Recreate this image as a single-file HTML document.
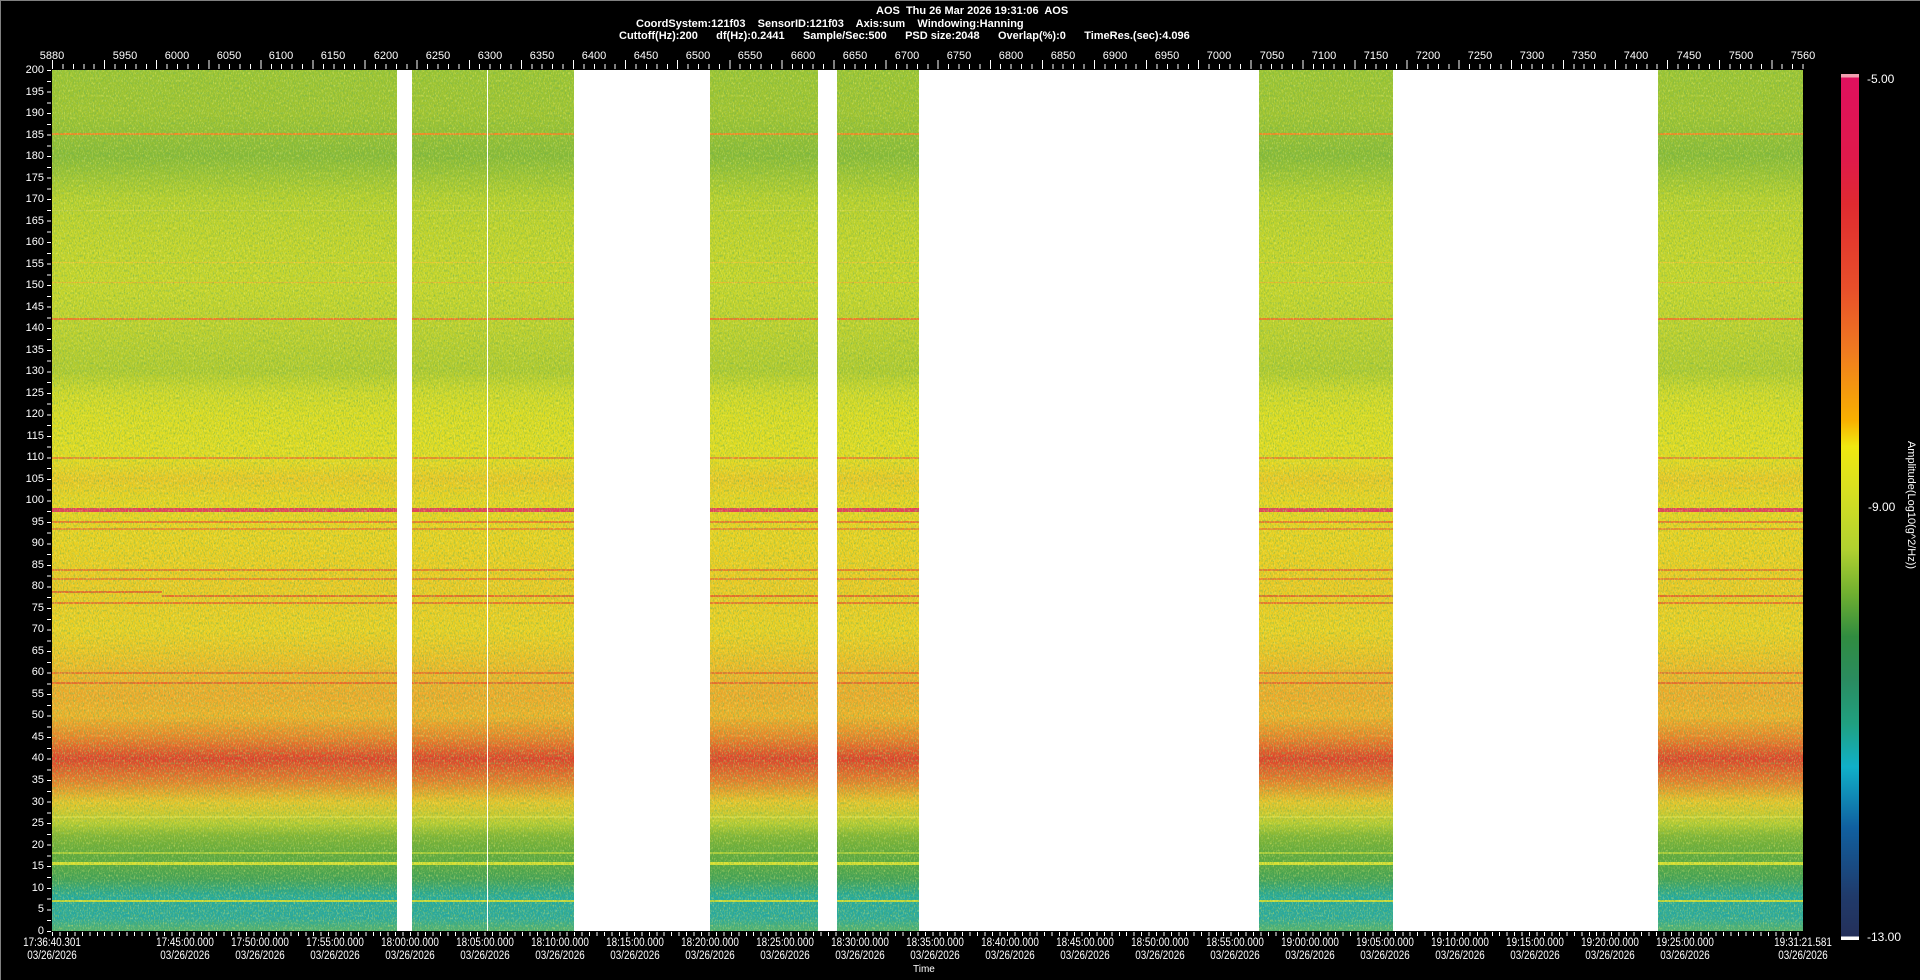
<!DOCTYPE html>
<html><head><meta charset="utf-8"><style>
*{margin:0;padding:0;box-sizing:border-box}
body{width:1920px;height:980px;background:#000;position:relative;overflow:hidden;font-family:"Liberation Sans",sans-serif;color:#fff}
.a{position:absolute;white-space:pre}
.h{font-weight:bold;font-size:11px;line-height:12px}
.yl{position:absolute;left:0;width:44px;text-align:right;font-size:11px;line-height:12px}
.xl{position:absolute;top:50px;width:60px;margin-left:-30px;text-align:center;font-size:11px;line-height:12px}
.tl{position:absolute;top:937px;width:90px;margin-left:-45px;text-align:center;font-size:11.5px;line-height:13px;transform:scaleX(0.86)}
#plot{position:absolute;left:52px;top:70px;width:1751px;height:861px;overflow:hidden;
background:linear-gradient(to bottom,#9cc432 0%,#a0c430 5%,#88ba36 10%,#b8d02c 15%,#c4d42a 20%,#c8d62a 25%,#bed02c 30%,#b0ca2e 35%,#d0d828 37.5%,#dcdc22 40%,#e4dc20 45%,#ecc824 47.5%,#e8d420 50%,#ecd020 55%,#eec822 60%,#ecd022 65%,#eec424 67.5%,#f0b428 70%,#f0a82a 72.5%,#f0b028 75%,#ec8028 77.5%,#e03c2a 80%,#e8782a 82.5%,#e8c42a 85%,#b8cc30 87.5%,#80b434 89%,#60a83c 91%,#58a840 92%,#40a058 94%,#20a8a0 96%,#28a8a0 98.5%,#50b070 100%)}
.ln{position:absolute;left:0;width:100%}
.gap{position:absolute;top:0;height:100%;background:#fff}
</style></head><body>
<div class="a" style="left:0;top:0;width:1920px;height:1px;background:#808080"></div>
<div class="a" style="left:0;top:0;width:1px;height:980px;background:#808080"></div>

<div class="a h" style="left:876px;top:5px">AOS  Thu 26 Mar 2026 19:31:06  AOS</div>
<div class="a h" style="left:636px;top:18px">CoordSystem:121f03    SensorID:121f03    Axis:sum    Windowing:Hanning</div>
<div class="a h" style="left:619px;top:30px">Cuttoff(Hz):200      df(Hz):0.2441      Sample/Sec:500      PSD size:2048      Overlap(%):0      TimeRes.(sec):4.096</div>

<div class="xl" style="left:52px">5880</div><div class="xl" style="left:125px">5950</div><div class="xl" style="left:177px">6000</div><div class="xl" style="left:229px">6050</div><div class="xl" style="left:281px">6100</div><div class="xl" style="left:333px">6150</div><div class="xl" style="left:386px">6200</div><div class="xl" style="left:438px">6250</div><div class="xl" style="left:490px">6300</div><div class="xl" style="left:542px">6350</div><div class="xl" style="left:594px">6400</div><div class="xl" style="left:646px">6450</div><div class="xl" style="left:698px">6500</div><div class="xl" style="left:750px">6550</div><div class="xl" style="left:803px">6600</div><div class="xl" style="left:855px">6650</div><div class="xl" style="left:907px">6700</div><div class="xl" style="left:959px">6750</div><div class="xl" style="left:1011px">6800</div><div class="xl" style="left:1063px">6850</div><div class="xl" style="left:1115px">6900</div><div class="xl" style="left:1167px">6950</div><div class="xl" style="left:1219px">7000</div><div class="xl" style="left:1272px">7050</div><div class="xl" style="left:1324px">7100</div><div class="xl" style="left:1376px">7150</div><div class="xl" style="left:1428px">7200</div><div class="xl" style="left:1480px">7250</div><div class="xl" style="left:1532px">7300</div><div class="xl" style="left:1584px">7350</div><div class="xl" style="left:1636px">7400</div><div class="xl" style="left:1689px">7450</div><div class="xl" style="left:1741px">7500</div><div class="xl" style="left:1803px">7560</div>
<div class="a" style="left:52px;top:64px;width:1752px;height:5px;background:repeating-linear-gradient(to right,#fff 0 1px,transparent 1px 10.42px)"></div>
<div class="a" style="left:52px;top:60px;width:1752px;height:5px;background:repeating-linear-gradient(to right,#fff 0 1px,transparent 1px 52.1px)"></div>

<div class="yl" style="top:64px">200</div><div class="yl" style="top:86px">195</div><div class="yl" style="top:107px">190</div><div class="yl" style="top:129px">185</div><div class="yl" style="top:150px">180</div><div class="yl" style="top:172px">175</div><div class="yl" style="top:193px">170</div><div class="yl" style="top:215px">165</div><div class="yl" style="top:236px">160</div><div class="yl" style="top:258px">155</div><div class="yl" style="top:279px">150</div><div class="yl" style="top:301px">145</div><div class="yl" style="top:322px">140</div><div class="yl" style="top:344px">135</div><div class="yl" style="top:365px">130</div><div class="yl" style="top:387px">125</div><div class="yl" style="top:408px">120</div><div class="yl" style="top:430px">115</div><div class="yl" style="top:451px">110</div><div class="yl" style="top:473px">105</div><div class="yl" style="top:494px">100</div><div class="yl" style="top:516px">95</div><div class="yl" style="top:537px">90</div><div class="yl" style="top:559px">85</div><div class="yl" style="top:580px">80</div><div class="yl" style="top:602px">75</div><div class="yl" style="top:623px">70</div><div class="yl" style="top:645px">65</div><div class="yl" style="top:666px">60</div><div class="yl" style="top:688px">55</div><div class="yl" style="top:709px">50</div><div class="yl" style="top:731px">45</div><div class="yl" style="top:752px">40</div><div class="yl" style="top:774px">35</div><div class="yl" style="top:796px">30</div><div class="yl" style="top:817px">25</div><div class="yl" style="top:839px">20</div><div class="yl" style="top:860px">15</div><div class="yl" style="top:882px">10</div><div class="yl" style="top:903px">5</div><div class="yl" style="top:925px">0</div>
<div class="a" style="left:47px;top:70px;width:4px;height:862px;background:repeating-linear-gradient(to bottom,#fff 0 1px,transparent 1px 10.76px)"></div>

<div id="plot">
<div class="ln" style="top:63px;height:2px;background:#f08a24"></div>
<div class="ln" style="top:140px;height:1px;background:#c8d440"></div>
<div class="ln" style="top:192px;height:1px;background:#e8c830"></div>
<div class="ln" style="top:212px;height:1px;background:#e8b830"></div>
<div class="ln" style="top:248px;height:2px;background:#f07a28"></div>
<div class="ln" style="top:387px;height:2px;background:#ee8a28"></div>
<div class="ln" style="top:438px;height:4px;background:#e83a5a"></div>
<div class="ln" style="top:451px;height:2px;background:#ee7a28"></div>
<div class="ln" style="top:458px;height:2px;background:#ee8a28"></div>
<div class="ln" style="top:499px;height:2px;background:#ee7a28"></div>
<div class="ln" style="top:508px;height:2px;background:#ee8428"></div>
<div class="ln" style="top:521px;height:2px;background:#e86a28;width:110px"></div>
<div class="ln" style="top:525px;left:110px;height:2px;background:#e86a28"></div>
<div class="ln" style="top:532px;height:2px;background:#ee7428"></div>
<div class="ln" style="top:602px;height:2px;background:#ee7428"></div>
<div class="ln" style="top:612px;height:2px;background:#ee6a2a"></div>
<div class="ln" style="top:746px;height:2px;background:#d8d840"></div>
<div class="ln" style="top:782px;height:2px;background:#a8cc38"></div>
<div class="ln" style="top:792px;height:3px;background:#d8e030"></div>
<div class="ln" style="top:830px;height:2px;background:#c8d838"></div>
<svg class="a" style="left:0;top:0" width="1751" height="861"><filter id="n"><feTurbulence type="fractalNoise" baseFrequency="0.8 0.4" numOctaves="2" seed="3"/><feColorMatrix values="0 0 0 0 0.15  0 0 0 0 0.45  0 0 0 0 0.1  0 0 0 2.2 -1.0"/></filter><filter id="m"><feTurbulence type="fractalNoise" baseFrequency="0.8 0.4" numOctaves="2" seed="9"/><feColorMatrix values="0 0 0 0 1  0 0 0 0 0.95  0 0 0 0 0.2  0 0 0 2.2 -1.1"/></filter><rect width="1751" height="861" filter="url(#n)" opacity="0.8"/><rect width="1751" height="861" filter="url(#m)" opacity="0.6"/></svg>
<div class="gap" style="left:345px;width:15px"></div>
<div class="gap" style="left:435px;width:1px"></div>
<div class="gap" style="left:522px;width:136px"></div>
<div class="gap" style="left:766px;width:19px"></div>
<div class="gap" style="left:867px;width:340px"></div>
<div class="gap" style="left:1341px;width:265px"></div>
</div>

<div class="a" style="left:52px;top:932px;width:1752px;height:4px;background:repeating-linear-gradient(to right,#fff 0 1px,transparent 1px 7.46px)"></div>
<div class="tl" style="left:52px">17:36:40.301<br>03/26/2026</div>
<div class="tl" style="left:185px">17:45:00.000<br>03/26/2026</div><div class="tl" style="left:260px">17:50:00.000<br>03/26/2026</div><div class="tl" style="left:335px">17:55:00.000<br>03/26/2026</div><div class="tl" style="left:410px">18:00:00.000<br>03/26/2026</div><div class="tl" style="left:485px">18:05:00.000<br>03/26/2026</div><div class="tl" style="left:560px">18:10:00.000<br>03/26/2026</div><div class="tl" style="left:635px">18:15:00.000<br>03/26/2026</div><div class="tl" style="left:710px">18:20:00.000<br>03/26/2026</div><div class="tl" style="left:785px">18:25:00.000<br>03/26/2026</div><div class="tl" style="left:860px">18:30:00.000<br>03/26/2026</div><div class="tl" style="left:935px">18:35:00.000<br>03/26/2026</div><div class="tl" style="left:1010px">18:40:00.000<br>03/26/2026</div><div class="tl" style="left:1085px">18:45:00.000<br>03/26/2026</div><div class="tl" style="left:1160px">18:50:00.000<br>03/26/2026</div><div class="tl" style="left:1235px">18:55:00.000<br>03/26/2026</div><div class="tl" style="left:1310px">19:00:00.000<br>03/26/2026</div><div class="tl" style="left:1385px">19:05:00.000<br>03/26/2026</div><div class="tl" style="left:1460px">19:10:00.000<br>03/26/2026</div><div class="tl" style="left:1535px">19:15:00.000<br>03/26/2026</div><div class="tl" style="left:1610px">19:20:00.000<br>03/26/2026</div><div class="tl" style="left:1685px">19:25:00.000<br>03/26/2026</div>
<div class="tl" style="left:1803px">19:31:21.581<br>03/26/2026</div>
<div class="a" style="left:913px;top:964px;font-size:10px">Time</div>

<div class="a" style="left:1841px;top:74px;width:18px;height:866px;background:linear-gradient(to bottom,#f0a0b0 0,#f0a0b0 3px,#e0105e 4px,#e01a4a 10%,#e02a30 15%,#e8502a 25%,#f07a20 32%,#f8b000 40%,#f0e810 43%,#d8e020 48%,#b0d030 55%,#70b030 60%,#308c40 65%,#2a8c60 70%,#20a080 75%,#10b0c8 80%,#1060a0 87%,#203a6a 95%,#24305a 99.6%,#fff 99.6%)"></div>
<div class="a" style="left:1867px;top:72px;font-size:12px">-5.00</div>
<div class="a" style="left:1868px;top:500px;font-size:12px">-9.00</div>
<div class="a" style="left:1867px;top:930px;font-size:12px">-13.00</div>
<div class="a" style="left:1911px;top:505px;font-size:11px;transform:translate(-50%,-50%) rotate(90deg)">Amplitude(Log10(g^2/Hz))</div>
</body></html>
